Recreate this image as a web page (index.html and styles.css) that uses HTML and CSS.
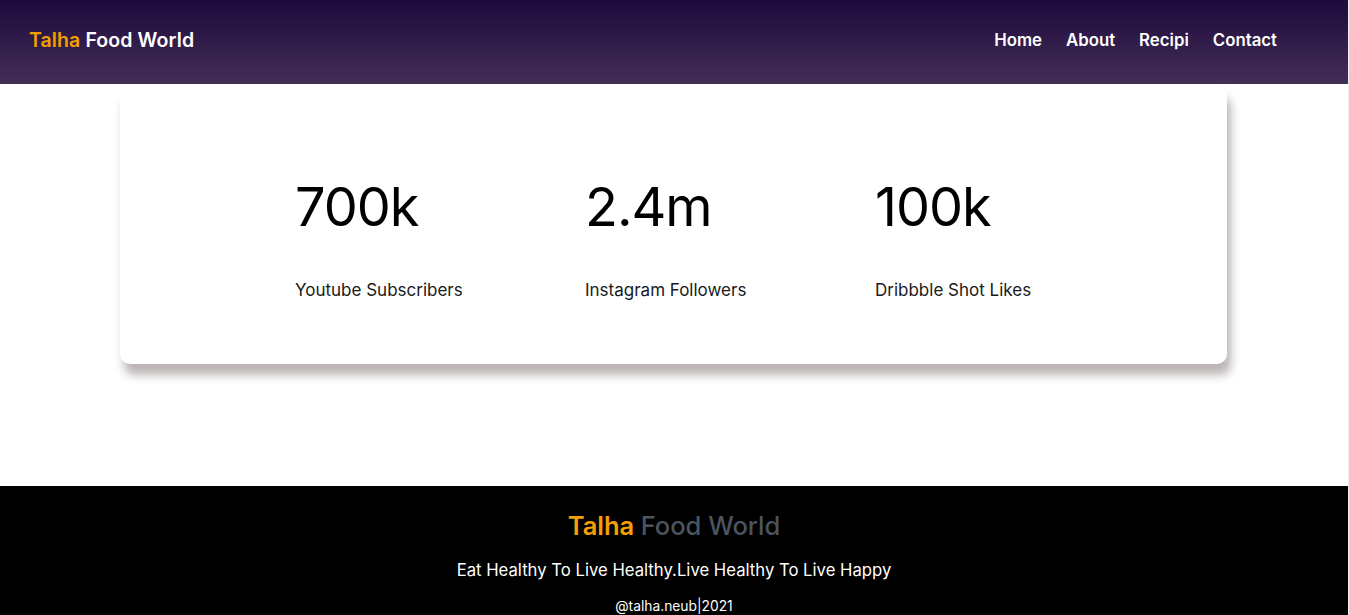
FILE: index.html
```html
<!DOCTYPE html>
<html lang="en">
<head>
<meta charset="utf-8">
<title>Talha Food World</title>
<link rel="stylesheet" href="styles.css">
</head>
<body>
<div class="page">
  <header class="topbar">
    <div class="brand"><span class="brand-accent">Talha</span> Food World</div>
    <nav class="nav">
      <a href="#" class="nav-link">Home</a>
      <a href="#" class="nav-link">About</a>
      <a href="#" class="nav-link">Recipi</a>
      <a href="#" class="nav-link">Contact</a>
    </nav>
  </header>
  <main class="main">
    <section class="stats-card">
      <div class="stat">
        <div class="stat-value">700k</div>
        <div class="stat-label">Youtube Subscribers</div>
      </div>
      <div class="stat">
        <div class="stat-value">2.4m</div>
        <div class="stat-label">Instagram Followers</div>
      </div>
      <div class="stat">
        <div class="stat-value">100k</div>
        <div class="stat-label">Dribbble Shot Likes</div>
      </div>
    </section>
  </main>
  <footer class="footer">
    <div class="footer-brand"><span class="brand-accent">Talha</span> <span class="footer-brand-rest">Food World</span></div>
    <p class="footer-tagline">Eat Healthy To Live Healthy.Live Healthy To Live Happy</p>
    <p class="footer-copy">@talha.neub|2021</p>
  </footer>
</div>
</body>
</html>
```
FILE: styles.css
```css
* { box-sizing: border-box; }
html { background: #f1f1f1; }
body {
  margin: 0;
  font-family: "Inter", "Open Sans", sans-serif;
  overflow: hidden;
}
.page {
  width: 1348px;
  height: 615px;
  background: #fff;
  display: flex;
  flex-direction: column;
}
.topbar {
  height: 84px;
  flex: none;
  background: linear-gradient(180deg, #1e0a3d 0%, #432e56 100%);
  display: flex;
  align-items: center;
  justify-content: space-between;
  padding: 0 71px 4px 29px;
}
.brand {
  color: #fff;
  font-size: 19.5px;
  font-weight: 600;
  letter-spacing: 0.1px;
}
.brand-accent { color: #f5a000; }
.nav { display: flex; gap: 24px; }
.nav-link {
  color: #fff;
  text-decoration: none;
  font-size: 16.8px;
  font-weight: 600;
}
.main {
  flex: 1;
  padding: 2px 121px 0 120px;
}
.stats-card {
  height: 278px;
  background: #fff;
  border-radius: 10px;
  box-shadow: 4px 11px 10px rgba(150, 140, 140, 0.65);
  display: flex;
  padding: 94px 0 0 175px;
}
.stat { width: 290px; }
.stat-value {
  font-size: 54px;
  font-weight: 400;
  color: #000;
  line-height: 1;
  letter-spacing: -1px;
}
.stat-label {
  margin-top: 46px;
  font-size: 17px;
  color: #1a1a1a;
}
.footer {
  height: 129px;
  flex: none;
  background: #000;
  display: flex;
  flex-direction: column;
  align-items: center;
  padding-top: 25px;
}
.footer-brand {
  font-size: 25.5px;
  font-weight: 600;
  line-height: 30px;
}
.footer-brand-rest { color: #4a5560; font-weight: 500; }
.footer-tagline {
  margin: 19px 0 0;
  color: #fff;
  font-size: 16.7px;
}
.footer-copy {
  margin: 18px 0 0;
  color: #fff;
  font-size: 13.8px;
}
```
